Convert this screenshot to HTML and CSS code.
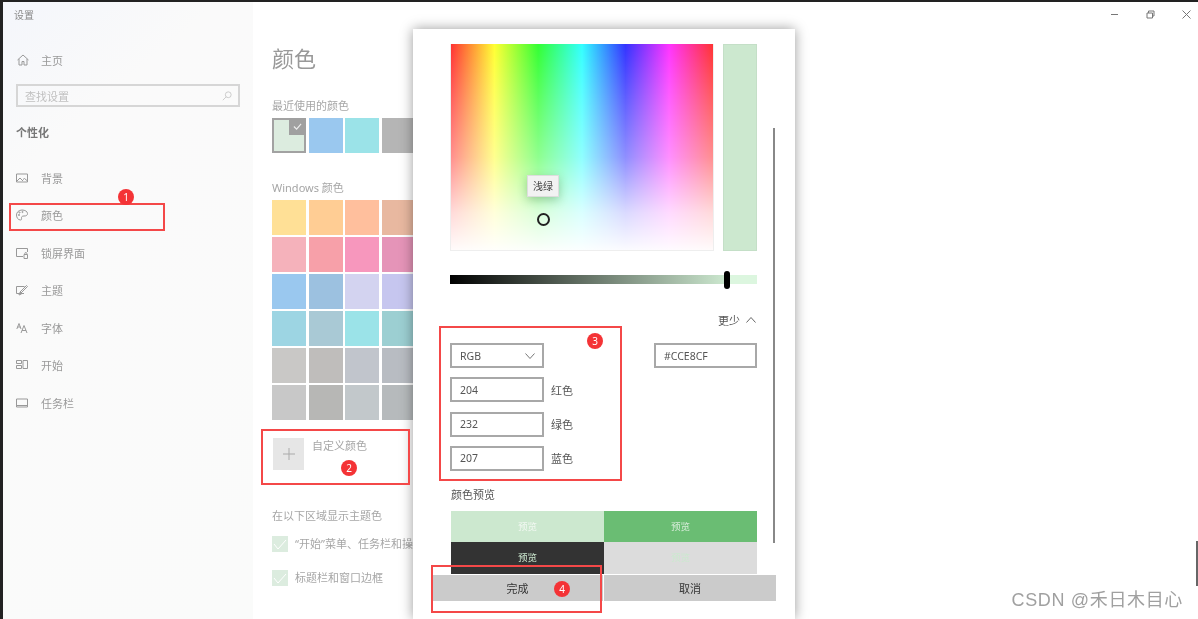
FILE: index.html
```html
<!DOCTYPE html>
<html lang="zh-CN">
<head>
    <meta charset="UTF-8">
    <meta name="viewport" content="width=device-width, initial-scale=1.0">
    <title>设置</title>
    <link rel="stylesheet" href="styles.css">
</head>
<body>
    <div class="window">
        <aside class="sidebar">
            <div class="app-title">设置</div>
            <a href="#" class="home-link">
                <svg class="icon" viewBox="0 0 12 12"><path d="M.5 6 6 1l5.500 5M2 5v6h3V7.500h2V11h3V5"/></svg>
                <span>主页</span>
            </a>
            <div class="search-box">
                <span>查找设置</span>
                <svg class="search-icon" viewBox="0 0 12 12"><circle cx="7.500" cy="4.500" r="3.500"/><path d="M5 7 1 11"/></svg>
            </div>
            <div class="section-title">个性化</div>
            <nav class="nav-list">
                <a href="#">
                    <svg class="icon" viewBox="0 0 12 12"><path d="M.5 2h11v8H.5zM1 9l3-3 3 3M7 7.500l1.500-1 3 2.500"/></svg>
                    <span>背景</span>
                </a>
                <a href="#">
                    <svg class="icon" viewBox="0 0 12 12"><path d="M6 1C2.500 1 .5 3.500.5 6c0 2.500 1.500 5 4 5 1.500 0 1-1.500 1-2.500S6.500 7 8 7c2 0 3.500-.5 3.500-2.500C11.500 2.500 9 1 6 1z"/><circle cx="3" cy="6" r=".6"/><circle cx="3.500" cy="3.500" r=".6"/><circle cx="6.500" cy="3" r=".6"/></svg>
                    <span>颜色</span>
                </a>
                <a href="#">
                    <svg class="icon" viewBox="0 0 12 12"><path d="M7 9.500H.5v-8h11V5"/><path d="M8 7.500h3.500v4H8zM8.800 7.500V6.500a1 1 0 0 1 2 0v1"/></svg>
                    <span>锁屏界面</span>
                </a>
                <a href="#">
                    <svg class="icon" viewBox="0 0 12 12"><path d="M8 9.500H.5v-7h8M4 8l6.500-6.500 1 1L5 9z"/><path d="M3.500 8.500 3 11l2.500-1"/></svg>
                    <span>主题</span>
                </a>
                <a href="#">
                    <svg class="icon" viewBox="0 0 12 12"><path d="M.8 7 3 1.500 5 7M1.500 5h3M5 11 8 3.500l3 7.500M6 8.500h4"/></svg>
                    <span>字体</span>
                </a>
                <a href="#">
                    <svg class="icon" viewBox="0 0 12 12"><path d="M.5 1.500h5v3h-5zM.5 6.500h5v3h-5zM7 1.500h4.500v8H7z"/></svg>
                    <span>开始</span>
                </a>
                <a href="#">
                    <svg class="icon" viewBox="0 0 12 12"><path d="M.5 2h11v8H.5zM.5 8.500h11"/></svg>
                    <span>任务栏</span>
                </a>
            </nav>
        </aside>

        <main class="content">
            <div class="win-controls">
                <svg viewBox="0 0 9 9"><path d="M1 4.500h7"/></svg>
                <svg viewBox="0 0 9 9"><path d="M1 3h5.500v5H1zM2.500 3V1H8v5H6.500"/></svg>
                <svg viewBox="0 0 9 9"><path d="m.5.500 8 8M8.500.500l-8 8"/></svg>
            </div>
            <h1 class="page-title">颜色</h1>
            <div class="label recent-label">最近使用的颜色</div>
            <div class="recent-row">
                <div class="swatch selected"><span class="tick"><svg viewBox="0 0 12 10"><path d="m2 5 3 3 5-6"/></svg></span></div>
                <div class="swatch recent-blue"></div>
                <div class="swatch recent-cyan"></div>
                <div class="swatch recent-grey"></div>
            </div>
            <div class="label windows-label">Windows 颜色</div>
            <div class="swatch-grid">
                <div></div><div></div><div></div><div></div>
                <div></div><div></div><div></div><div></div>
                <div></div><div></div><div></div><div></div>
                <div></div><div></div><div></div><div></div>
                <div></div><div></div><div></div><div></div>
                <div></div><div></div><div></div><div></div>
            </div>
            <div class="custom-color">
                <div class="plus-box"><svg viewBox="0 0 12 12"><path d="M6 0v12M0 6h12"/></svg></div>
                <span class="label">自定义颜色</span>
            </div>
            <div class="label accent-label">在以下区域显示主题色</div>
            <div class="check-row">
                <span class="checkbox"><svg viewBox="0 0 16 16"><path d="m2 8 4 5 8-9"/></svg></span>
                <span class="label">“开始”菜单、任务栏和操作中心</span>
            </div>
            <div class="check-row">
                <span class="checkbox"><svg viewBox="0 0 16 16"><path d="m2 8 4 5 8-9"/></svg></span>
                <span class="label">标题栏和窗口边框</span>
            </div>
        </main>

        <section class="dialog">
            <div class="scrollbar"></div>
            <div class="picker-row">
                <div class="spectrum">
                    <div class="tooltip">浅绿</div>
                    <div class="picker-ring"></div>
                </div>
                <div class="current-color"></div>
            </div>
            <div class="value-slider"><span class="slider-thumb"></span></div>
            <div class="more-row">
                <span>更少</span>
                <svg viewBox="0 0 10 6"><path d="m.5 5.500 4.500-5 4.500 5"/></svg>
            </div>
            <div class="color-form">
                <div class="form-row">
                    <div class="field select-field">
                        <span>RGB</span>
                        <svg viewBox="0 0 10 6"><path d="m.5.500 4.500 5 4.500-5"/></svg>
                    </div>
                    <div class="field hex-field">#CCE8CF</div>
                </div>
                <div class="form-row">
                    <div class="field">204</div>
                    <span class="field-label">红色</span>
                </div>
                <div class="form-row">
                    <div class="field">232</div>
                    <span class="field-label">绿色</span>
                </div>
                <div class="form-row">
                    <div class="field">207</div>
                    <span class="field-label">蓝色</span>
                </div>
            </div>
            <div class="preview-title">颜色预览</div>
            <div class="preview-grid">
                <div class="preview-light">预览</div>
                <div class="preview-green">预览</div>
                <div class="preview-dark">预览</div>
                <div class="preview-grey">预览</div>
            </div>
            <div class="dialog-buttons">
                <button>完成</button>
                <button>取消</button>
            </div>
        </section>

        <!-- red notes drawn on top of the screenshot -->
        <div class="note note-1"></div>
        <div class="note note-2"></div>
        <div class="note note-3"></div>
        <div class="note note-4"></div>
        <span class="badge badge-1">1</span>
        <span class="badge badge-2">2</span>
        <span class="badge badge-3">3</span>
        <span class="badge badge-4">4</span>

        <div class="edge-handle"></div>
        <div class="watermark">CSDN @禾日木目心</div>
    </div>
</body>
</html>
```

FILE: styles.css
```css
* {
    margin: 0;
    padding: 0;
    box-sizing: border-box;
    font-family: "Noto Sans", "Noto Sans CJK SC", sans-serif;
}

body {
    background-color: #fff;
    overflow: hidden;
}

a {
    text-decoration: none;
    color: inherit;
}

svg {
    fill: none;
    stroke: #999;
    stroke-width: 1;
}

.window {
    position: relative;
    display: flex;
    width: 1198px;
    height: 619px;
    overflow: hidden;
    background-color: #fff;
    border-top: 2px solid #222;
    border-left: 3px solid #222;
    filter: blur(0.5px);
}

/* sidebar */
.sidebar {
    width: 250px;
    padding: 0 13px;
    color: #999;
    font-size: 11px;
    background: linear-gradient(140deg, #f4f6fb 0, #fafafa 22%, #fafbfa 100%);
}

.app-title {
    height: 26px;
    line-height: 26px;
    font-size: 10px;
    color: #888;
    margin-left: -2px;
}

.home-link {
    display: flex;
    align-items: center;
    gap: 12px;
    height: 38px;
    margin-top: 13px;
    margin-left: 1px;
}

.icon {
    width: 12px;
    height: 12px;
    flex-shrink: 0;
}

.search-box {
    display: flex;
    justify-content: space-between;
    align-items: center;
    width: 224px;
    height: 23px;
    margin-top: 5px;
    padding: 0 6px 0 7px;
    border: 2px solid #d6d6d6;
    color: #c0c0c0;
}

.search-icon {
    width: 10px;
    height: 10px;
    stroke: #c4c4c4;
}

.section-title {
    height: 16px;
    line-height: 16px;
    margin-top: 18px;
    font-weight: 700;
    color: #777;
}

.nav-list {
    margin-top: 18px;
}

.nav-list a {
    display: flex;
    align-items: center;
    gap: 13px;
    height: 37.5px;
}

/* main pane */
.content {
    flex: 1;
    padding-left: 19px;
}

.win-controls {
    display: flex;
    justify-content: flex-end;
    gap: 27px;
    height: 24px;
    padding: 8px 7px 0 0;
}

.win-controls svg {
    width: 9px;
    height: 9px;
    stroke: #777;
}

.page-title {
    height: 30px;
    margin-top: 17px;
    line-height: 30px;
    font-size: 22px;
    font-weight: 400;
    color: #999;
}

.label {
    font-size: 11px;
    line-height: 16px;
    color: #a6a6a6;
}

.recent-label {
    margin-top: 25px;
}

.recent-row {
    display: flex;
    gap: 2.5px;
    margin-top: 4px;
}

.swatch {
    position: relative;
    width: 34px;
    height: 35px;
}

.selected {
    background-color: #dcecdf;
    border: 2px solid #a2a2a2;
}

.tick {
    position: absolute;
    top: -2px;
    right: -2px;
    display: flex;
    align-items: center;
    justify-content: center;
    width: 17px;
    height: 17px;
    background-color: #a0a0a0;
}

.tick svg {
    width: 11px;
    height: 9px;
    stroke: #eee;
    stroke-width: 1.2;
}

.recent-blue { background-color: #9ac8ef; }
.recent-cyan { background-color: #9be3e8; }
.recent-grey { background-color: #b5b5b5; }

.windows-label {
    margin-top: 27px;
}

.swatch-grid {
    display: grid;
    grid-template-columns: repeat(4, 34px);
    grid-auto-rows: 35px;
    gap: 2px 2.5px;
    margin-top: 4px;
}

.swatch-grid div:nth-child(1) { background-color: #ffe096; }
.swatch-grid div:nth-child(2) { background-color: #ffcd94; }
.swatch-grid div:nth-child(3) { background-color: #ffbf9d; }
.swatch-grid div:nth-child(4) { background-color: #e8b8a0; }
.swatch-grid div:nth-child(5) { background-color: #f5b2bb; }
.swatch-grid div:nth-child(6) { background-color: #f7a0a9; }
.swatch-grid div:nth-child(7) { background-color: #f797bd; }
.swatch-grid div:nth-child(8) { background-color: #e594b8; }
.swatch-grid div:nth-child(9) { background-color: #9ac8ef; }
.swatch-grid div:nth-child(10) { background-color: #9cc1e0; }
.swatch-grid div:nth-child(11) { background-color: #d3d3f0; }
.swatch-grid div:nth-child(12) { background-color: #c6c6ef; }
.swatch-grid div:nth-child(13) { background-color: #9dd5e3; }
.swatch-grid div:nth-child(14) { background-color: #a9c9d5; }
.swatch-grid div:nth-child(15) { background-color: #9be3e8; }
.swatch-grid div:nth-child(16) { background-color: #9ccfd2; }
.swatch-grid div:nth-child(17) { background-color: #c9c8c6; }
.swatch-grid div:nth-child(18) { background-color: #bfbdbb; }
.swatch-grid div:nth-child(19) { background-color: #c1c5cc; }
.swatch-grid div:nth-child(20) { background-color: #b8bcc2; }
.swatch-grid div:nth-child(21) { background-color: #c8c8c8; }
.swatch-grid div:nth-child(22) { background-color: #b7b7b5; }
.swatch-grid div:nth-child(23) { background-color: #c2c8cb; }
.swatch-grid div:nth-child(24) { background-color: #b6babc; }

.custom-color {
    display: flex;
    gap: 8px;
    height: 32px;
    margin: 18px 0 0 1px;
}

.plus-box {
    display: flex;
    align-items: center;
    justify-content: center;
    width: 31px;
    height: 32px;
    background-color: #e6e6e6;
}

.plus-box svg {
    width: 12px;
    height: 12px;
    stroke: #aaa;
}

.accent-label {
    margin-top: 38px;
}

.check-row {
    display: flex;
    align-items: center;
    gap: 7px;
    height: 16px;
    margin-top: 12px;
    white-space: nowrap;
}

.check-row + .check-row {
    margin-top: 18px;
}

.checkbox {
    width: 16px;
    height: 16px;
    flex-shrink: 0;
    background-color: #dcecdf;
}

.checkbox svg {
    display: block;
    stroke: #fff;
}

/* colour picker dialog */
.dialog {
    position: absolute;
    top: 27px;
    left: 410px;
    width: 382px;
    height: 590px;
    padding: 15px 38px 0 37px;
    background-color: #fff;
    box-shadow: 0 0 12px rgba(0, 0, 0, 0.4);
}

.scrollbar {
    position: absolute;
    top: 99px;
    left: 360px;
    width: 2px;
    height: 415px;
    background-color: #888;
}

.picker-row {
    display: flex;
    gap: 9px;
    height: 207px;
}

.spectrum {
    position: relative;
    width: 264px;
    border: 1px solid #eee;
    border-top: none;
    background:
        linear-gradient(to bottom, rgba(255, 255, 255, 0) 0, rgba(255, 255, 255, 0.45) 55%, rgba(255, 255, 255, 0.82) 82%, rgba(255, 255, 255, 0.98) 100%),
        linear-gradient(to right, #ff3333, #ffff33 16.6%, #33ff33 33.3%, #33ffff 50%, #3333ff 66.6%, #ff33ff 83.3%, #ff3333);
}

.tooltip {
    position: absolute;
    top: 131px;
    left: 76px;
    width: 32px;
    height: 22px;
    line-height: 21px;
    text-align: center;
    font-size: 10px;
    color: #444;
    background-color: #f2f2f2;
    border: 1px solid #ddd;
    box-shadow: 0 3px 10px rgba(0, 60, 0, 0.25);
}

.picker-ring {
    position: absolute;
    top: 169px;
    left: 86px;
    width: 13px;
    height: 13px;
    border: 2px solid #222;
    border-radius: 50%;
}

.current-color {
    width: 34px;
    background-color: #cce8cf;
    border: 1px solid #c4dfc7;
}

.value-slider {
    position: relative;
    height: 9px;
    margin-top: 24px;
    background: linear-gradient(to right, #000, #cce8cf 90%, #dcf6df 90%);
}

.slider-thumb {
    position: absolute;
    top: -4px;
    left: 274px;
    width: 6px;
    height: 18px;
    border-radius: 3px;
    background-color: #000;
}

.more-row {
    display: flex;
    justify-content: flex-end;
    align-items: center;
    gap: 6px;
    height: 16px;
    margin-top: 28px;
    padding-right: 1px;
    font-size: 11px;
    color: #555;
}

.more-row svg {
    width: 10px;
    height: 6px;
    stroke: #666;
}

.color-form {
    display: flex;
    flex-direction: column;
    gap: 9.33px;
    margin-top: 15px;
}

.form-row {
    display: flex;
    align-items: center;
    gap: 7px;
}

.field {
    display: flex;
    align-items: center;
    width: 94px;
    height: 25px;
    padding-left: 8px;
    border: 2px solid #a8a8a8;
    font-size: 10.5px;
    color: #555;
}

.select-field {
    justify-content: space-between;
    padding-right: 7px;
}

.select-field svg {
    width: 10px;
    height: 6px;
    stroke: #777;
}

.hex-field {
    width: 103px;
    margin-left: auto;
}

.field-label {
    font-size: 11px;
    color: #555;
}

.preview-title {
    height: 16px;
    line-height: 16px;
    margin: 16px 0 0 1px;
    font-size: 11px;
    color: #555;
}

.preview-grid {
    display: grid;
    grid-template-columns: 1fr 1fr;
    grid-auto-rows: 31.5px;
    margin: 8px 0 0 1px;
    font-size: 9.5px;
    text-align: center;
    line-height: 32px;
}

.preview-light { background-color: #cce8cf; color: #f2f8f2; }
.preview-green { background-color: #6abd73; color: #d6ecd8; }
.preview-dark { background-color: #333; color: #cce8cf; }
.preview-grey { background-color: #dcdcdc; color: #cce8cf; }

.dialog-buttons {
    display: flex;
    gap: 1px;
    margin: 1px 0 0 -18px;
    width: 344px;
}

.dialog-buttons button {
    flex: 1;
    height: 26px;
    border: none;
    font-size: 11px;
    color: #333;
    background-color: #cbcbcb;
}

.dialog-buttons button:first-child {
    flex: 0 0 171px;
}

/* annotations */
.note {
    position: absolute;
    border: 2px solid #f44848;
}

.note-1 { top: 201px; left: 6px; width: 156px; height: 28px; }
.note-2 { top: 427px; left: 258px; width: 149px; height: 56px; }
.note-3 { top: 324px; left: 436px; width: 183px; height: 155px; }
.note-4 { top: 563px; left: 428px; width: 171px; height: 48px; }

.badge {
    position: absolute;
    width: 16px;
    height: 16px;
    line-height: 16px;
    border-radius: 50%;
    text-align: center;
    font-size: 10px;
    color: #fff;
    background-color: #f43336;
}

.badge-1 { top: 187px; left: 115px; }
.badge-2 { top: 458px; left: 338px; }
.badge-3 { top: 331px; left: 584px; }
.badge-4 { top: 579px; left: 551px; }

.edge-handle {
    position: absolute;
    top: 539px;
    right: 0;
    width: 2px;
    height: 45px;
    background-color: #666;
}

.watermark {
    position: absolute;
    top: 585px;
    right: 15px;
    font-family: "Liberation Sans", "Noto Sans CJK SC", sans-serif;
    font-size: 18px;
    letter-spacing: 0.65px;
    line-height: 26px;
    color: #a0a0a0;
    white-space: nowrap;
}
```
